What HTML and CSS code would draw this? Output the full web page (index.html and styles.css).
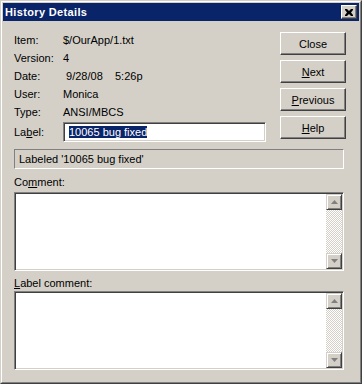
FILE: index.html
```html
<!DOCTYPE html>
<html lang="en">
<head>
    <meta charset="UTF-8">
    <title>History Details</title>
    <link rel="stylesheet" href="styles.css">
</head>
<body>
    <div class="window">
        <div class="frame">
            <div class="titlebar">
                <span class="title">History Details</span>
                <div class="title-close">
                    <svg width="8" height="7" viewBox="0 0 8 7"><path d="M0 0h2l2 2 2-2h2v1l-2 2.5 2 2.5v1h-2l-2-2-2 2h-2v-1l2-2.5-2-2.5z" fill="#000"/></svg>
                </div>
            </div>
            <div class="content">
                <div class="top">
                    <div class="info">
                        <div class="row"><span class="key">Item:</span><span class="val">$/OurApp/1.txt</span></div>
                        <div class="row"><span class="key">Version:</span><span class="val">4</span></div>
                        <div class="row"><span class="key">Date:</span><span class="val"> 9/28/08    5:26p</span></div>
                        <div class="row"><span class="key">User:</span><span class="val">Monica</span></div>
                        <div class="row"><span class="key">Type:</span><span class="val">ANSI/MBCS</span></div>
                        <div class="row label-row">
                            <span class="key">La<u>b</u>el:</span>
                            <div class="edit"><span class="sel">10065 bug fixed</span></div>
                        </div>
                    </div>
                    <div class="buttons">
                        <div class="btn">Close</div>
                        <div class="btn"><u>N</u>ext</div>
                        <div class="btn"><u>P</u>revious</div>
                        <div class="btn"><u>H</u>elp</div>
                    </div>
                </div>
                <div class="status">Labeled '10065 bug fixed'</div>
                <div class="caption">Co<u>m</u>ment:</div>
                <div class="memo">
                    <div class="memo-body"></div>
                    <div class="scroll">
                        <div class="arrow"><svg width="7" height="4" viewBox="0 0 7 4"><path d="M3.5 0L7 4H0z" fill="#808080"/></svg></div>
                        <div class="track"></div>
                        <div class="arrow"><svg width="7" height="4" viewBox="0 0 7 4"><path d="M0 0h7L3.5 4z" fill="#808080"/></svg></div>
                    </div>
                </div>
                <div class="caption second"><u>L</u>abel comment:</div>
                <div class="memo">
                    <div class="memo-body"></div>
                    <div class="scroll">
                        <div class="arrow"><svg width="7" height="4" viewBox="0 0 7 4"><path d="M3.5 0L7 4H0z" fill="#808080"/></svg></div>
                        <div class="track"></div>
                        <div class="arrow"><svg width="7" height="4" viewBox="0 0 7 4"><path d="M0 0h7L3.5 4z" fill="#808080"/></svg></div>
                    </div>
                </div>
            </div>
        </div>
    </div>
</body>
</html>
```

FILE: styles.css
```css
body {
    margin: 0;
    background-color: #d4d0c8;
    font-family: "Liberation Sans", Arial, sans-serif;
    font-size: 11px;
    color: #000;
}

u {
    text-decoration: underline;
    text-underline-offset: 1px;
}

.window {
    width: 362px;
    height: 384px;
    box-sizing: border-box;
    border: 1px solid;
    border-color: #d4d0c8 #404040 #404040 #d4d0c8;
}

.frame {
    height: 100%;
    box-sizing: border-box;
    border: 1px solid;
    border-color: #fff #808080 #808080 #fff;
    padding: 1px;
}

.titlebar {
    height: 18px;
    background-color: #0a246a;
    display: flex;
    align-items: center;
    justify-content: space-between;
    padding: 0 2px 0 2px;
}

.title {
    color: #fff;
    font-weight: bold;
    font-size: 11px;
    letter-spacing: 0.35px;
}

.title-close {
    width: 16px;
    height: 14px;
    box-sizing: border-box;
    background-color: #d4d0c8;
    border: 1px solid;
    border-color: #fff #404040 #404040 #fff;
    box-shadow: inset -1px -1px #808080;
    display: flex;
    align-items: center;
    justify-content: center;
}

.content {
    padding: 10px 15px 0 11px;
}

.top {
    display: flex;
    margin-right: -2px;
}

.info {
    flex: 1;
}

.row {
    display: flex;
    height: 18px;
    line-height: 18px;
}

.key {
    width: 49px;
}

.val {
    white-space: pre;
}

.label-row {
    height: 20px;
    line-height: 20px;
    margin-top: 1px;
}

.edit {
    width: 203px;
    height: 20px;
    box-sizing: border-box;
    background-color: #fff;
    border: 1px solid;
    border-color: #808080 #fff #fff #808080;
    box-shadow: inset 1px 1px #404040, inset -1px -1px #d4d0c8;
    padding-left: 5px;
    display: flex;
    align-items: center;
}

.sel {
    background-color: #0a246a;
    color: #fff;
    line-height: 12px;
}

.buttons {
    width: 66px;
    margin-top: 1px;
    display: flex;
    flex-direction: column;
    gap: 5px;
}

.btn {
    height: 23px;
    box-sizing: border-box;
    border: 1px solid;
    border-color: #fff #404040 #404040 #fff;
    box-shadow: inset -1px -1px #808080;
    display: flex;
    align-items: center;
    justify-content: center;
}

.status {
    margin-top: 7px;
    height: 20px;
    box-sizing: border-box;
    border: 1px solid;
    border-color: #808080 #fff #fff #808080;
    padding-left: 4px;
    line-height: 18px;
}

.caption {
    margin-top: 6px;
    margin-bottom: 3px;
    height: 14px;
    line-height: 14px;
}

.caption.second {
    margin-top: 5px;
    margin-bottom: 1px;
}

.memo {
    height: 79px;
    box-sizing: border-box;
    background-color: #fff;
    border: 1px solid;
    border-color: #808080 #fff #fff #808080;
    box-shadow: inset 1px 1px #404040, inset -1px -1px #d4d0c8;
    padding: 1px;
    display: flex;
}

.memo-body {
    flex: 1;
}

.scroll {
    width: 16px;
    display: flex;
    flex-direction: column;
}

.arrow {
    height: 16px;
    box-sizing: border-box;
    background-color: #d4d0c8;
    border: 1px solid;
    border-color: #d4d0c8 #404040 #404040 #d4d0c8;
    box-shadow: inset 1px 1px #fff, inset -1px -1px #808080;
    display: flex;
    align-items: center;
    justify-content: center;
}

.track {
    flex: 1;
    background: repeating-conic-gradient(#d4d0c8 0 25%, #fff 0 50%) 0 0 / 2px 2px;
}
```
